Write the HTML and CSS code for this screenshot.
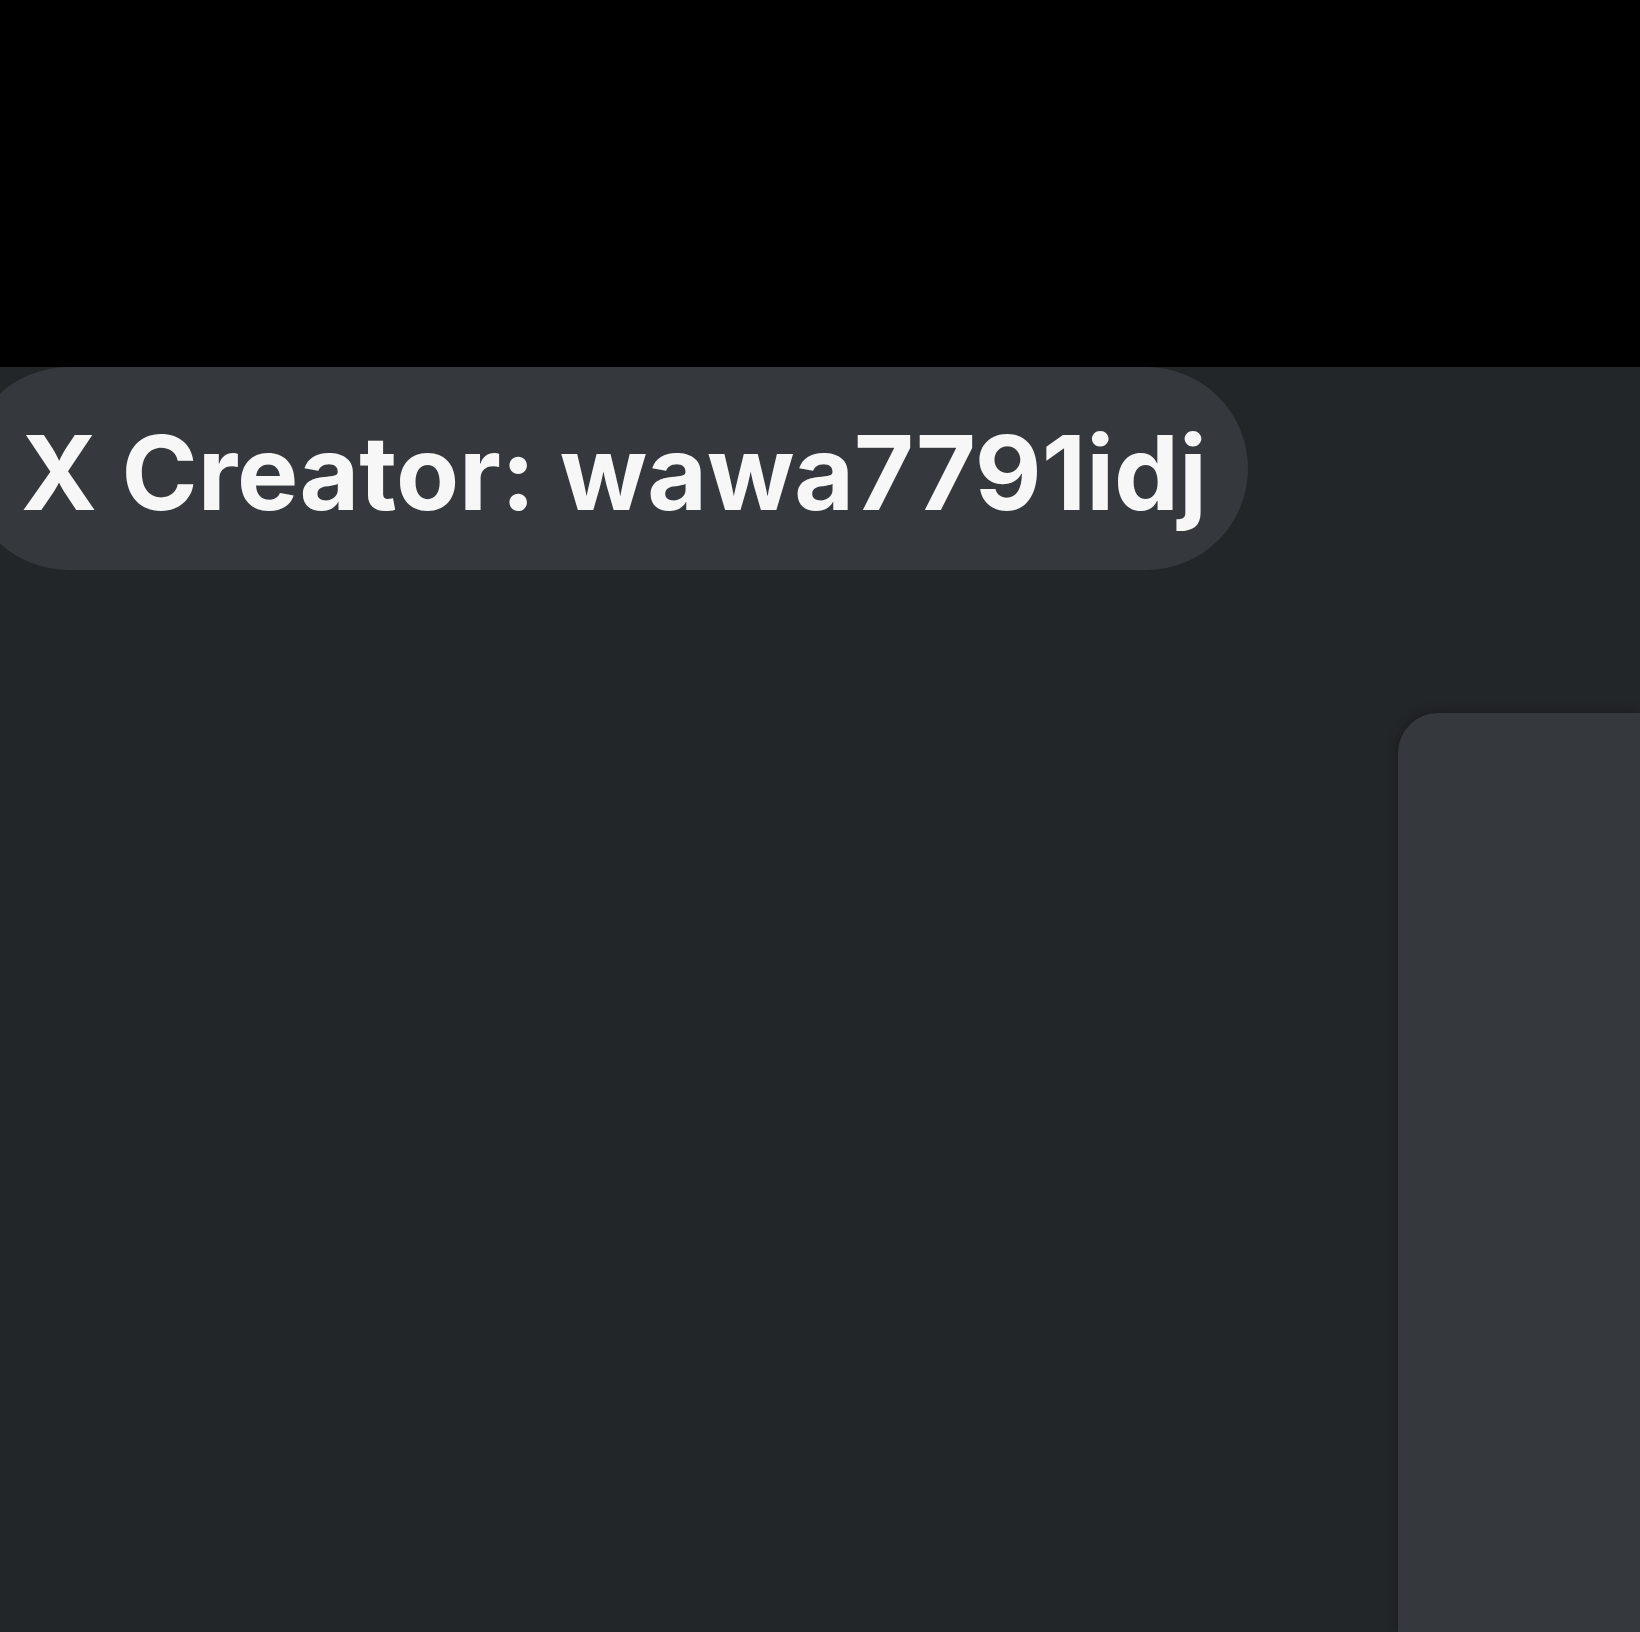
FILE: index.html
```html
<!DOCTYPE html>
<html lang="en">
<head>
<meta charset="utf-8">
<title>X Creator</title>
<link rel="stylesheet" href="styles.css">
</head>
<body>
<div class="topbar"></div>
<main class="stage">
  <div class="pill"><span class="pill-text">X Creator: wawa7791idj</span></div>
  <div class="card"></div>
</main>
</body>
</html>
```
FILE: styles.css
```css
html, body {
  margin: 0;
  padding: 0;
  height: 100%;
  overflow: hidden;
}
body {
  background: #232629;
  display: flex;
  flex-direction: column;
}
.topbar {
  height: 367px;
  background: #000;
  flex: none;
}
.stage {
  flex: 1;
  display: flex;
  flex-direction: column;
  align-items: flex-start;
}
.pill {
  margin-left: -33px;
  width: 1281px;
  height: 203px;
  box-sizing: border-box;
  border-radius: 102px;
  background: #35383c;
  display: flex;
  align-items: center;
  padding-left: 54px;
  padding-top: 8px;
}
.pill-text {
  font-family: "Inter", sans-serif;
  font-weight: 700;
  font-size: 103px;
  color: #f7f7f7;
  white-space: nowrap;
  letter-spacing: 0;
  line-height: 1;
}
.card {
  margin-top: 143px;
  margin-left: 1398px;
  flex: 1;
  align-self: stretch;
  background: #35383c;
  border-radius: 40px 0 0 0;
  box-shadow: 0 0 12px rgba(0,0,0,0.35);
}
```
